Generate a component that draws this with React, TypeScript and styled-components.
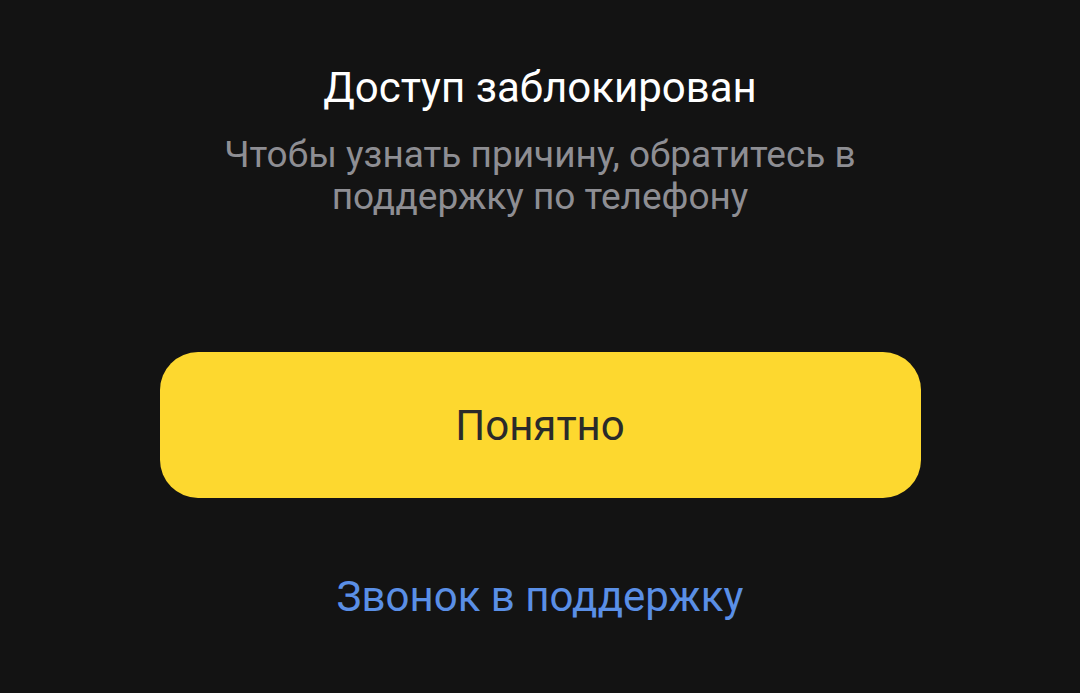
import React from 'react';
import styled, {createGlobalStyle} from 'styled-components';

const GlobalStyle = createGlobalStyle`
  html, body {
    margin: 0;
    padding: 0;
    background: #131313;
  }
  body {
    font-family: Roboto, "Noto Sans", sans-serif;
  }
`

const App = () => {
    return (
        <>
            <GlobalStyle/>
            <Screen>
                <Title>Доступ заблокирован</Title>
                <Subtitle>Чтобы узнать причину, обратитесь в<br/>поддержку по телефону</Subtitle>
                <PrimaryButton>Понятно</PrimaryButton>
                <LinkButton>Звонок в поддержку</LinkButton>
            </Screen>
        </>
    );
};

const Screen = styled.div`
  width: 1080px;
  height: 693px;
  box-sizing: border-box;
  display: flex;
  flex-direction: column;
  align-items: center;
  padding-top: 62px;
  background: #131313;
`

const Title = styled.h1`
  margin: 0;
  font-size: 42px;
  font-weight: 400;
  line-height: 52px;
  color: #ffffff;
`

const Subtitle = styled.p`
  margin: 20px 0 0;
  font-size: 37px;
  line-height: 42px;
  text-align: center;
  color: #8e8e93;
`

const PrimaryButton = styled.button`
  margin-top: 134px;
  width: 761px;
  height: 146px;
  border: none;
  border-radius: 38px;
  background: #fdd82f;
  color: #2a2a2a;
  font-family: inherit;
  font-size: 42px;
  cursor: pointer;
`

const LinkButton = styled.button`
  margin-top: 73px;
  border: none;
  background: none;
  padding: 0;
  color: #5a8fe6;
  font-family: inherit;
  font-size: 42px;
  line-height: 52px;
  cursor: pointer;
`

export default App;
